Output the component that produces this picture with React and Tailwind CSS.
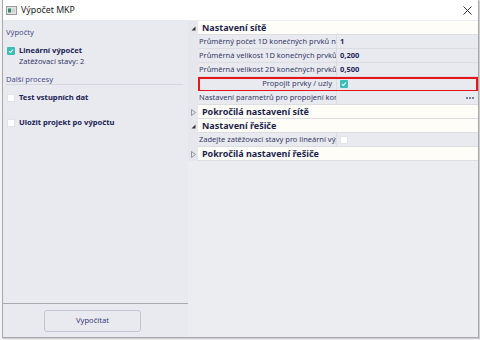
import React from "react";

const Check = ({ checked }) => (
  <div
    className={
      "w-[8px] h-[8px] flex items-center justify-center shrink-0 " +
      (checked ? "bg-[#3dbdb6] rounded-[1px]" : "bg-white border border-[#e2e3e8]")
    }
  >
    {checked && (
      <svg width="6" height="6" viewBox="0 0 6 6">
        <path d="M1 3.2 L2.4 4.5 L5 1.5" stroke="white" strokeWidth="1.1" fill="none" />
      </svg>
    )}
  </div>
);

const TriDown = () => (
  <svg width="5" height="5" viewBox="0 0 5 5">
    <path d="M4.5 0.5 L4.5 4.5 L0.5 4.5 Z" fill="#333" />
  </svg>
);
const TriRight = () => (
  <svg width="5" height="7" viewBox="0 0 5 7">
    <path d="M0.5 0.5 L4.5 3.5 L0.5 6.5 Z" fill="none" stroke="#8a8a95" strokeWidth="0.9" />
  </svg>
);

const Header = ({ open, children }) => (
  <div className="flex h-[14px] items-stretch">
    <div className="w-[10px] flex items-center justify-center bg-[#e6e7ec]">
      {open ? <TriDown /> : <TriRight />}
    </div>
    <div className="flex-1 bg-[#fffdf7] border-b border-[#dcdde3] flex items-center pl-[4px] font-bold text-[#1c1f4e] text-[9px]">
      {children}
    </div>
  </div>
);

const Prop = ({ name, value, right, children, extra }) => (
  <div className="flex h-[14px] items-stretch relative">
    <div className="w-[10px] bg-[#e6e7ec]" />
    <div
      className={
        "w-[139px] bg-[#e9eaf0] border-b border-r border-[#dcdde3] flex items-center px-[1px] whitespace-nowrap overflow-hidden text-[#363968] text-[7.5px] " +
        (right ? "justify-end pr-[4px]" : "")
      }
    >
      {name}
    </div>
    <div className="flex-1 bg-[#e9eaf0] border-b border-[#dcdde3] flex items-center pl-[3px] font-bold text-[#23265a] text-[7.5px]">
      {value}
      {children}
      {extra}
    </div>
  </div>
);

const Dots = () => (
  <div className="ml-auto mr-[4px] flex gap-[1px]">
    <div className="w-[2px] h-[2px] bg-[#7a7da3]" />
    <div className="w-[2px] h-[2px] bg-[#7a7da3]" />
    <div className="w-[2px] h-[2px] bg-[#7a7da3]" />
  </div>
);

export default function App() {
  return (
    <div className="w-[480px] h-[340px] bg-[#f3f3f3] pl-[2px] font-['Noto_Sans',sans-serif] text-[7.5px] leading-none">
      <div className="w-[477px] h-[338px] border border-t-0 border-[#a9a9ad] bg-white flex flex-col shadow-[1px_1px_1px_rgba(0,0,0,0.15)]">
        {/* title bar */}
        <div className="h-[20px] flex items-center bg-white pl-[3px] pr-[6px]">
          <svg width="11" height="9" viewBox="0 0 11 9" className="mr-[4px]">
            <rect x="0.5" y="0.5" width="10" height="8" fill="#e4e4e4" stroke="#9a9a9a" />
            <rect x="2" y="2.5" width="3" height="4" fill="#2f8a6a" />
            <rect x="5.5" y="2.5" width="3.5" height="4" fill="#cfd0d3" />
          </svg>
          <span className="text-[8.8px] text-[#222]">Výpočet MKP</span>
          <div className="flex-1" />
          <svg width="9" height="9" viewBox="0 0 9 9">
            <path d="M0.5 0.5 L8.5 8.5 M8.5 0.5 L0.5 8.5" stroke="#333" strokeWidth="1" />
          </svg>
        </div>
        {/* body */}
        <div className="flex-1 flex min-h-0">
          {/* left panel */}
          <div className="w-[185px] bg-[#e9eaef] flex flex-col">
            <div className="flex-1 pl-[3px] pr-[5px]">
              <div className="mt-[8px] h-[10px] flex items-center text-[#4a4e8e] text-[7.6px]">Výpočty</div>
              <div className="mt-[8px] h-[10px] flex items-center">
                <div className="ml-[1px]"><Check checked /></div>
                <div className="ml-[4px] font-bold text-[#202356] text-[7.6px]">Lineární výpočet</div>
              </div>
              <div className="mt-[1px] h-[10px] flex items-center pl-[13px] text-[#363968] text-[7.5px]">Zatěžovací stavy: 2</div>
              <div className="mt-[9px] h-[9px] flex items-center text-[#4a4e8e] text-[7.6px] border-b border-[#d6d7de]">Další procesy</div>
              <div className="mt-[8px] h-[10px] flex items-center">
                <div className="ml-[1px]"><Check /></div>
                <div className="ml-[4px] font-bold text-[#202356] text-[7.6px]">Test vstupních dat</div>
              </div>
              <div className="mt-[15px] h-[10px] flex items-center">
                <div className="ml-[1px]"><Check /></div>
                <div className="ml-[4px] font-bold text-[#202356] text-[7.6px]">Uložit projekt po výpočtu</div>
              </div>
            </div>
            <div className="h-[34px] border-t border-[#a9aab0] flex items-center pl-[41px]">
              <div className="w-[97px] h-[22px] border border-[#c3c5d2] rounded-[3px] bg-[#e9eaef] flex items-center justify-center text-[#3a3d7a] text-[7.6px]">
                Vypočítat
              </div>
            </div>
          </div>
          {/* right panel */}
          <div className="flex-1 bg-[#ecedf1] pt-[1px]">
            <Header open>Nastavení sítě</Header>
            <Prop name="Průměrný počet 1D konečných prvků na" value="1" />
            <Prop name="Průměrná velikost 1D konečných prvků" value="0,200" />
            <Prop name="Průměrná velikost 2D konečných prvků" value="0,500" />
            <div className="relative">
              <Prop name="Propojit prvky / uzly" right>
                <Check checked />
              </Prop>
              <div className="absolute left-[10px] right-0 top-[0px] bottom-[-1px] border-2 border-[#e8141c] pointer-events-none" />
            </div>
            <Prop name="Nastavení parametrů pro propojení konstrukce" extra={<Dots />} />
            <Header>Pokročilá nastavení sítě</Header>
            <Header open>Nastavení řešiče</Header>
            <Prop name="Zadejte zatěžovací stavy pro lineární výpočet">
              <Check />
            </Prop>
            <Header>Pokročilá nastavení řešiče</Header>
          </div>
        </div>
      </div>
    </div>
  );
}
